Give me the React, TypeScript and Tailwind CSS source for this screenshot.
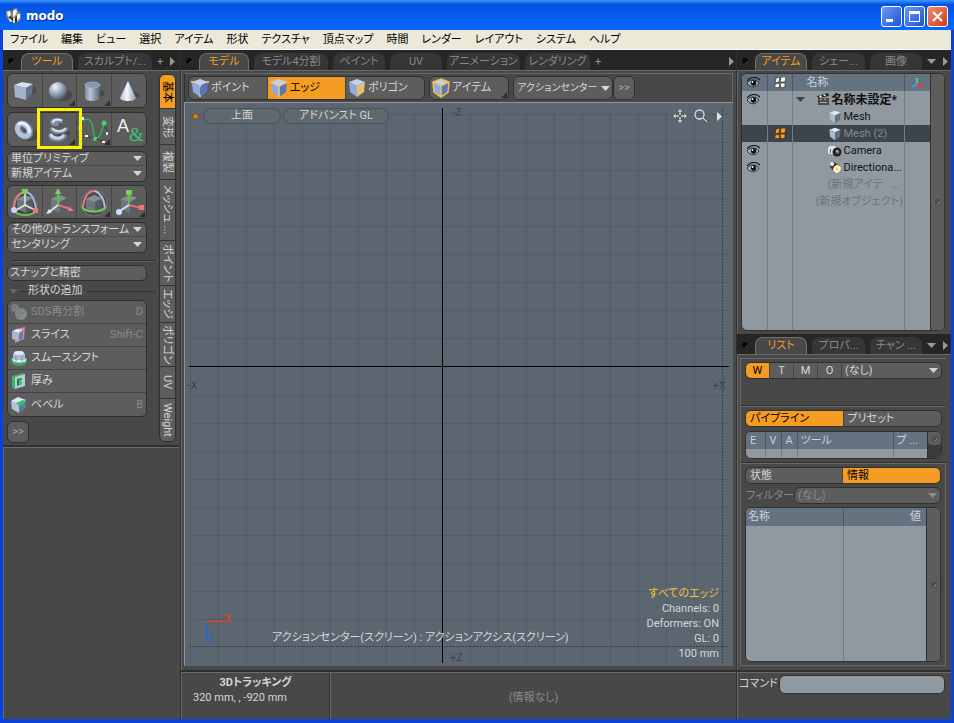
import type { ReactNode } from "react";
import { clsx } from "clsx";

const menus = [
  "ファイル",
  "編集",
  "ビュー",
  "選択",
  "アイテム",
  "形状",
  "テクスチャ",
  "頂点マップ",
  "時間",
  "レンダー",
  "レイアウト",
  "システム",
  "ヘルプ",
];

const sideTabs = [
  { label: "基本", size: "h-[34px]" },
  { label: "変形", size: "h-[36px]" },
  { label: "複製", size: "h-[35px]" },
  { label: "メッシュ ...", size: "h-[61px]" },
  { label: "ポイント", size: "h-[45px]" },
  { label: "エッジ", size: "h-[37px]" },
  { label: "ポリゴン", size: "h-[44px]" },
  { label: "UV", size: "h-[32px]" },
  { label: "Weight", size: "h-[42px]" },
];

function Gradients() {
  return (
    <svg className="absolute h-0 w-0" aria-hidden="true">
      <defs>
        <radialGradient id="ball" cx="0.35" cy="0.28" r="0.75">
          <stop offset="0" stopColor="#f1f5fa" />
          <stop offset="0.4" stopColor="#a9bad0" />
          <stop offset="1" stopColor="#4b5768" />
        </radialGradient>
        <linearGradient id="tube" x1="0" x2="1">
          <stop offset="0" stopColor="#7e8ca1" />
          <stop offset="0.35" stopColor="#b9c6d8" />
          <stop offset="1" stopColor="#566275" />
        </linearGradient>
        <linearGradient id="coneFill" x1="0" x2="1">
          <stop offset="0.1" stopColor="#b9cbe0" />
          <stop offset="0.45" stopColor="#f3f8fd" />
          <stop offset="1" stopColor="#8295ad" />
        </linearGradient>
      </defs>
    </svg>
  );
}

/* ---------- icons ---------- */

function Logo() {
  return (
    <svg width="17" height="16" viewBox="0 0 17 16">
      <path d="M1 3l4-1 2 2 1-3 4-1 1 3 3 2v6l-2 3-4 1H6l-3-4-2-3z" fill="#7e837e" />
      <path d="M2 4l3-1 1 4-3 2zM8 3l3-2 1 3-2 4-2 1zM12 6l3 0v4l-3 3z" fill="#f4f4ee" />
      <path d="M5 8l3 2v5H6L4 11zM10 10l2-2v6l-2 1z" fill="#2f3530" />
      <path d="M3 10l2 4h3l-2-3zM8 9l2 1v5H8z" fill="#d5d8d2" />
    </svg>
  );
}

function BoxIcon() {
  return (
    <svg width="28" height="28" viewBox="0 0 28 28">
      <path d="M12 23l14-8-3-6-8 4z" fill="#333" opacity=".45" />
      <path d="M3 8l8-3 11 2-7 4z" fill="#d7e1ee" />
      <path d="M3 8l12 3v12L4 20z" fill="#a3b2c7" />
      <path d="M15 11l7-4-1 10-6 6z" fill="#657389" />
    </svg>
  );
}

function SphereIcon() {
  return (
    <svg width="28" height="28" viewBox="0 0 28 28">
      <ellipse cx="18" cy="18" rx="9" ry="6" fill="#333" opacity=".5" />
      <circle cx="13" cy="14" r="9" fill="url(#ball)" />
    </svg>
  );
}

function CylinderIcon() {
  return (
    <svg width="28" height="28" viewBox="0 0 28 28">
      <path d="M13 23l12-5-3-6-4 4z" fill="#333" opacity=".5" />
      <path d="M5 8v13c0 4 15 4 15 0V8z" fill="url(#tube)" />
      <ellipse cx="12.5" cy="8" rx="7.5" ry="3" fill="#8796ac" stroke="#a8b6ca" strokeWidth=".7" />
    </svg>
  );
}

function ConeIcon() {
  return (
    <svg width="28" height="28" viewBox="0 0 28 28">
      <path d="M13 24l12-5-9-7z" fill="#333" opacity=".5" />
      <path d="M13 4L5 21c1 4 15 4 16 0z" fill="url(#coneFill)" />
    </svg>
  );
}

function TorusIcon() {
  return (
    <svg width="28" height="28" viewBox="0 0 28 28">
      <ellipse cx="19" cy="19" rx="9" ry="6" fill="#333" opacity=".5" />
      <g transform="rotate(50 13 14)" fill="none">
        <ellipse cx="13" cy="14" rx="7" ry="5" stroke="#6d7e98" strokeWidth="7" />
        <ellipse cx="12.5" cy="14.5" rx="7" ry="5.2" stroke="#b3c3d9" strokeWidth="5" />
        <path d="M5 14c1-5 8-7 13-3" stroke="#eef4fb" strokeWidth="2.5" strokeLinecap="round" />
      </g>
    </svg>
  );
}

function CoilIcon() {
  return (
    <svg width="28" height="28" viewBox="0 0 28 28" fill="none" strokeLinecap="round">
      <path d="M12 24l14-6-5-8-9 7z" fill="#333" opacity=".45" />
      {/* lower coil, middle coil, then the thin top one */}
      <path d="M6 20c1 4 11 4 13 0" stroke="#7d8ea8" strokeWidth="5" />
      <path d="M6 19c2 4 10 4 12 1" stroke="#c9d6e8" strokeWidth="3" />
      <path d="M7 13c2 4 10 4 14 0" stroke="#7d8ea8" strokeWidth="4" />
      <path d="M8 13c3 3 9 3 12 0" stroke="#d5e1f0" strokeWidth="2" />
      <path d="M16 5c-4-2-8-1-9 1 0 2 2 2 5 2" stroke="#7d8ea8" strokeWidth="4" />
      <path d="M16 4c-4-1-7 0-8 2" stroke="#dfe9f5" strokeWidth="2" />
    </svg>
  );
}

function CurveIcon() {
  return (
    <svg width="34" height="32" viewBox="0 0 34 32" fill="none" className="shrink-0">
      <path d="M6 4L4 14M8 22l20 6M27 9l4 10" stroke="#222" strokeDasharray="2 2" />
      <path d="M3 14C4 3 15 2 16 14s6 16 11-5" stroke="#35b060" strokeWidth="1.5" />
      <circle cx="27" cy="9" r="2.5" fill="#42d07c" />
      <circle cx="18" cy="25" r="2" fill="#42d07c" />
      <circle cx="3" cy="14" r="2" fill="#42d07c" />
      <path d="M5 3h2v3H5zM8 21h3v2H8zM25 27h3v2h-3zM29 18h2v3h-2z" fill="#f2f2f2" />
    </svg>
  );
}

function TextIcon() {
  return (
    <svg width="32" height="32" viewBox="0 0 32 32">
      <text x="4" y="18" fontSize="18" fontFamily="Liberation Sans" fill="#eef1f5">A</text>
      <text x="16" y="27" fontSize="19" fontFamily="Liberation Serif" fill="#36c573">&amp;</text>
    </svg>
  );
}

function GizmoCube() {
  return (
    <g>
      <path d="M8 12l8-4 8 3v10l-7 5-9-4z" fill="#6e777b" />
      <path d="M8 12l8-4 8 3-7 4z" fill="#858e92" />
      <path d="M17 15l7-4v10l-7 5z" fill="#555d61" />
    </g>
  );
}

function TransformIcon() {
  return (
    <svg width="32" height="31" viewBox="0 0 32 31" fill="none">
      <circle cx="16" cy="17" r="12" fill="#444" stroke="#777" />
      <GizmoCube />
      <path d="M5 22C5 12 9 7 15 5" stroke="#e97d82" strokeWidth="2" />
      <path d="M18 5c5 2 8 8 9 17" stroke="#a9b4e6" strokeWidth="2" />
      <path d="M6 25c5 4 15 4 20 0" stroke="#63bf56" strokeWidth="2" />
      <path d="M16 7v11L6 24M16 18l10 5" stroke="#dfe6ea" strokeWidth="1.5" />
      <path d="M13 2h6v5h-6z" fill="#6fd356" />
      <path d="M24 21h5v5h-5z" fill="#ef7773" />
      <circle cx="5" cy="23" r="3" fill="#c8d0fa" />
    </svg>
  );
}

function MoveIcon() {
  return (
    <svg width="32" height="31" viewBox="0 0 32 31" fill="none">
      <GizmoCube />
      <path d="M15 5v13" stroke="#5fbd4c" strokeWidth="2" />
      <path d="M15 18l13 4" stroke="#e46f75" strokeWidth="2" />
      <path d="M15 18L5 26" stroke="#d4e0ef" strokeWidth="2" />
      <path d="M15 1l3 6h-6z" fill="#79d55f" />
      <path d="M31 24l-6 0 1-4z" fill="#ef7b80" />
      <path d="M3 27l3-5 3 3z" fill="#e5ecf6" />
    </svg>
  );
}

function RotateIcon() {
  return (
    <svg width="32" height="31" viewBox="0 0 32 31" fill="none">
      <circle cx="16" cy="16" r="13" fill="#4a4a4a" stroke="#777" />
      <GizmoCube />
      <path d="M5 20C6 10 10 4 17 4" stroke="#e67b80" strokeWidth="2" />
      <path d="M17 4c6 2 9 8 10 17" stroke="#b3bfee" strokeWidth="2" />
      <path d="M4 20c4 6 19 6 24 0" stroke="#72cc5f" strokeWidth="2" />
    </svg>
  );
}

function ScaleIcon() {
  return (
    <svg width="32" height="31" viewBox="0 0 32 31" fill="none">
      <GizmoCube />
      <path d="M16 6v12" stroke="#5fbd4c" strokeWidth="2" />
      <path d="M16 18l12 3" stroke="#e46f75" strokeWidth="2" />
      <path d="M16 18l-9 6" stroke="#d4e0ef" strokeWidth="2" />
      <path d="M13 3h6v5h-6z" fill="#6fd356" />
      <path d="M26 18h5v5h-5z" fill="#ef7773" />
      <circle cx="6" cy="25" r="3" fill="#d3dcfa" />
    </svg>
  );
}

type CubeKind = "point" | "edge" | "polygon" | "item" | "mesh";

function ModeCube({ kind }: { kind: CubeKind }) {
  const size = kind === "mesh" ? 14 : 20;
  return (
    <svg width={size} height={size} viewBox="0 0 20 20" className="shrink-0">
      <path d="M2 4l8-3 8 3-8 4z" fill={kind === "mesh" ? "#dce8f2" : "#c3d0ee"} />
      <path d="M2 4l8 4v11l-7-5z" fill={kind === "mesh" ? "#a9bccd" : "#92a9e2"} />
      <path
        d="M18 4l-8 4v11l7-5z"
        fill={kind === "polygon" ? "#e0c473" : kind === "mesh" ? "#5f7185" : "#5b74b8"}
      />
      {kind === "edge" && <path d="M10 19V8L2 4M10 8l8-4" stroke="#e9cf83" strokeWidth="1.5" fill="none" />}
      {kind === "item" && (
        <path d="M2 4l8-3 8 3-1 10-7 5-7-5zM2 4l8 4 8-4M10 8v11" stroke="#e5c25e" strokeWidth="1.5" fill="none" />
      )}
      {kind === "point" && (
        <path d="M1 3h3v2H1zM16 3h3v2h-3zM9 7h2v2H9zM9 17h2v2H9zM9 1h2v1H9z" fill="#edc24a" />
      )}
    </svg>
  );
}

function EyeIcon() {
  return (
    <svg width="13" height="11" viewBox="0 0 13 11" className="ml-[5px]">
      <path d="M0 4c3-4 9-5 13-1" stroke="#16191c" strokeWidth="1.2" fill="none" />
      <path d="M0 6c3-4 9-4 12 0-3 5-9 5-12 0z" fill="#a5adb5" stroke="#16191c" strokeWidth=".8" />
      <circle cx="6.5" cy="6" r="2.7" fill="#0c0d0e" />
      <circle cx="5.5" cy="5" r=".9" fill="#fff" />
    </svg>
  );
}

function TilesIcon({ fill }: { fill: string }) {
  return (
    <svg width="12" height="12" viewBox="0 0 12 12" className="mx-auto">
      <path d="M2 1l4-1-1 5-4 1zM7 0h5l-1 5H6zM1 7l4-1 1 4-5 1zM6 6h5v4l-4 1z" fill={fill} stroke="#222" strokeWidth=".6" />
    </svg>
  );
}

function AxesIcon() {
  return (
    <svg width="13" height="12" viewBox="0 0 13 12" className="mx-auto" fill="none" strokeWidth="2.5">
      <path d="M6 7V1" stroke="#3ccb7c" />
      <path d="M6 7l6 3" stroke="#e33a34" />
      <path d="M6 7l-5 3" stroke="#6084e8" />
    </svg>
  );
}

function SceneIcon() {
  return (
    <svg width="13" height="13" viewBox="0 0 13 13" className="shrink-0">
      <path d="M1 5h11v7H1z" fill="#4b4b4b" />
      <path d="M0 3l11-3 1 3-11 2z" fill="#222" />
      <path d="M2 3l2-1 1 2-2 1zM6 2l2-1 1 2H7z" fill="#ddd" />
      <path d="M3 9h7v1H3zM3 6h2v1H3zM7 6h2v1H7z" fill="#aaa" />
    </svg>
  );
}

function CameraIcon() {
  return (
    <svg width="14" height="12" viewBox="0 0 14 12" className="shrink-0">
      <path d="M0 3l2-2h5l2 2v6l-7 0-2-1z" fill="#e4e4e4" />
      <path d="M2 4h1v4H2z" fill="#666" />
      <circle cx="9" cy="7" r="4.5" fill="#222" />
      <circle cx="9.5" cy="7" r="2" fill="#6c6c78" />
      <circle cx="9" cy="6" r=".8" fill="#fff" />
    </svg>
  );
}

function LightIcon() {
  return (
    <svg width="14" height="13" viewBox="0 0 14 13" className="shrink-0">
      <path d="M2 2l4-1 6 4-5 7-5-6z" fill="#3b3b38" />
      <circle cx="4" cy="3" r="2" fill="#f0f0ea" />
      <ellipse cx="9" cy="8" rx="3.5" ry="4" transform="rotate(35 9 8)" fill="#fff5bd" />
      <ellipse cx="9" cy="8" rx="1.5" ry="2" fill="#ecd679" />
    </svg>
  );
}

function SdsIcon() {
  return (
    <svg width="18" height="18" viewBox="0 0 18 18">
      <circle cx="5" cy="5" r="4" fill="#7d8080" />
      <circle cx="11" cy="11" r="6" fill="#858a8a" />
      <path d="M2 5l5-3M5 9l4-4M7 14l8-6M6 11l7-5" stroke="#6c6c6c" strokeWidth=".7" />
    </svg>
  );
}

function SliceIcon() {
  return (
    <svg width="18" height="18" viewBox="0 0 18 18">
      <path d="M6 3l9-2-1 12-9 4z" fill="#dd84a6" />
      <path d="M2 5l5-2 6 1-4 3z" fill="#e2ebf7" />
      <path d="M2 5l7 2v8l-7-2z" fill="#a4b6d0" />
      <path d="M9 7l4-3v8l-4 3z" fill="#6c7d98" />
    </svg>
  );
}

function SmoothShiftIcon() {
  return (
    <svg width="18" height="18" viewBox="0 0 18 18">
      <ellipse cx="9" cy="12" rx="8" ry="5" fill="#37ad62" />
      <path d="M3 5l3-3h6l3 3v6l-3 3H6l-3-3z" fill="#a8bfd9" />
      <ellipse cx="9" cy="4" rx="5" ry="2" fill="#dce8f5" />
      <path d="M1 9l3 2h10l3-2-2 4H4z" fill="#edf3f8" />
      <path d="M6 7v6M12 7v6" stroke="#7d93ae" />
    </svg>
  );
}

function ThickenIcon() {
  return (
    <svg width="18" height="18" viewBox="0 0 18 18">
      <path d="M2 4l11-3 2 1-9 3-1 12-3-2z" fill="#2fb866" />
      <path d="M5 5l10-3v12L5 17z" fill="#b7ccd8" />
      <path d="M7 7l5-1v6l-5 2z" fill="#27774a" />
      <path d="M9 8l3-1v5l-3 1z" fill="#45c177" />
    </svg>
  );
}

function BevelIcon() {
  return (
    <svg width="18" height="18" viewBox="0 0 18 18">
      <path d="M1 5l7-4 8 3-7 5z" fill="#dbe7f5" />
      <path d="M1 5l8 4v8l-7-4z" fill="#b3c5de" />
      <path d="M9 9l7-5v8l-7 5z" fill="#62759a" />
      <path d="M6 7l7-3 2 1-2 4-4 1z" fill="#35c26d" />
    </svg>
  );
}

function Arrow({ dir = "down", className }: { dir?: "down" | "right"; className?: string }) {
  return (
    <svg width="9" height="9" viewBox="0 0 9 9" className={clsx("shrink-0", className)} fill="currentColor">
      {dir === "down" ? <path d="M0 2h9L4.5 7z" /> : <path d="M2 0v9l5-4.5z" />}
    </svg>
  );
}

function Knob() {
  return (
    <svg width="8" height="8" viewBox="0 0 8 8" className="shrink-0">
      <circle cx="4" cy="4" r="3" fill="#4c4c4c" />
      <path d="M3 6a3 3 0 003-3" stroke="#858585" fill="none" />
    </svg>
  );
}

/* ---------- building blocks ---------- */

function Tab({ children, active, className }: { children: ReactNode; active?: boolean; className?: string }) {
  return (
    <button
      className={clsx(
        "h-[17px] shrink-0 whitespace-nowrap rounded-t-lg leading-4",
        active ? "border-x border-t border-[#707070] bg-[#484848] text-[#f59d22]" : "bg-[#363636] text-[#898989]",
        className,
      )}
    >
      {children}
    </button>
  );
}

function TabBar({ children }: { children: ReactNode }) {
  return (
    <div className="flex h-5 shrink-0 items-end gap-[5px] bg-[#262626] pl-[5px] text-[#999]">
      <svg width="8" height="17" viewBox="0 0 8 17" className="shrink-0">
        <circle cx="3" cy="8" r="3" fill="#080808" />
        <path d="M3 11l3-3" stroke="#555" />
      </svg>
      {children}
    </div>
  );
}

function Dropdown({ label, value, className, arrow = "right-1" }: { label: string; value: string; className?: string; arrow?: string }) {
  return (
    <div className={clsx("relative min-w-0", className)}>
      <select aria-label={label} className="block h-full w-full appearance-none bg-transparent pl-[3px] pr-3 outline-none">
        <option>{value}</option>
      </select>
      <Arrow className={clsx("pointer-events-none absolute inset-y-0 my-auto", arrow)} />
    </div>
  );
}

const group = "overflow-hidden rounded-md border border-[#303030] bg-[#5d5d5d]";

function IconRow({ items, className }: { items: { name: string; icon: ReactNode; more?: boolean }[]; className?: string }) {
  return (
    <div className={clsx(group, "grid grid-cols-4 divide-x divide-[#464646]", className)}>
      {items.map((item) => (
        <button key={item.name} aria-label={item.name} className="relative flex items-center justify-center overflow-hidden">
          {item.icon}
          {item.more && (
            <svg width="6" height="6" className="absolute bottom-px right-px">
              <path d="M6 0v6H0z" fill="#2f2f2f" />
            </svg>
          )}
        </button>
      ))}
    </div>
  );
}

const shapeTools = [
  { label: "SDS再分割", hint: "D", icon: <SdsIcon />, off: true },
  { label: "スライス", hint: "Shift-C", icon: <SliceIcon /> },
  { label: "スムースシフト", icon: <SmoothShiftIcon /> },
  { label: "厚み", icon: <ThickenIcon /> },
  { label: "ベベル", hint: "B", icon: <BevelIcon /> },
];

/* ---------- left column ---------- */

function ToolColumn() {
  return (
    <aside className="flex w-[178px] shrink-0 flex-col border-r border-[#303030]">
      <TabBar>
        <Tab active className="w-[52px]">ツール</Tab>
        <Tab className="w-[74px]">スカルプト/...</Tab>
        <button className="h-[17px] leading-4">+</button>
        <Arrow dir="right" className="mb-1" />
      </TabBar>

      <div className="flex justify-between border-t border-[#6a6a6a] pb-[2px] pl-1 pr-[4px] pt-[2px]">
        <div className="flex w-[140px] flex-col">
          <IconRow
            className="h-[35px]"
            items={[
              { name: "立方体", icon: <BoxIcon /> },
              { name: "球", icon: <SphereIcon />, more: true },
              { name: "円柱", icon: <CylinderIcon />, more: true },
              { name: "円錐", icon: <ConeIcon /> },
            ]}
          />
          <div className="relative mt-1">
            <IconRow
              className="h-[35px]"
              items={[
                { name: "トーラス", icon: <TorusIcon /> },
                { name: "らせん", icon: <CoilIcon />, more: true },
                { name: "カーブ", icon: <CurveIcon />, more: true },
                { name: "テキスト", icon: <TextIcon /> },
              ]}
            />
            <div className="pointer-events-none absolute -top-1 left-[30px] h-[41px] w-[45px] border-[3px] border-[#fff200]" />
          </div>
          <div className={clsx(group, "mt-1 divide-y divide-[#4a4a4a]")}>
            <Dropdown label="プリミティブ" value="単位プリミティブ" className="h-[14px]" />
            <Dropdown label="アイテム" value="新規アイテム" className="h-[15px]" />
          </div>
          <IconRow
            className="mt-[3px] h-[34px]"
            items={[
              { name: "トランスフォーム", icon: <TransformIcon /> },
              { name: "移動", icon: <MoveIcon /> },
              { name: "回転", icon: <RotateIcon />, more: true },
              { name: "スケール", icon: <ScaleIcon />, more: true },
            ]}
          />
          <div className={clsx(group, "mt-[3px] divide-y divide-[#4a4a4a]")}>
            <Dropdown label="トランスフォーム" value="その他のトランスフォーム" className="h-[14px]" />
            <Dropdown label="センター" value="センタリング" className="h-[15px]" />
          </div>
          <div className="-mr-2 ml-1 mt-[7px] border-b border-t border-b-[#5c5c5c] border-t-[#303030]" />
          <button className={clsx(group, "mt-[3px] h-4 pl-[2px] text-left leading-[14px]")}>スナップと精密</button>
          <div className="-mr-2 flex h-5 items-center gap-1">
            <Arrow className="ml-[2px] text-[#666]" />
            <span className="-mr-[2px] h-px w-1 bg-[#303030]" />
            <span className="whitespace-nowrap">形状の追加</span>
            <span className="h-px flex-1 bg-[#303030]" />
          </div>
          <div className={clsx(group, "-mt-px divide-y divide-[#444]")}>
            {shapeTools.map((tool) => (
              <button
                key={tool.label}
                className={clsx("flex h-[23px] w-full items-center gap-[3px] pl-[2px] pr-[3px]", tool.off && "text-[#8a8a8a]")}
              >
                {tool.icon}
                <span>{tool.label}</span>
                <span className="ml-auto text-[#8a8a8a]">{tool.hint}</span>
              </button>
            ))}
          </div>
          <button className={clsx(group, "mt-1 h-[22px] w-[22px] text-[#a0a8b4]")}>&gt;&gt;</button>
        </div>

        <div className="mt-px flex w-[17px] flex-col divide-y divide-[#343434] self-start overflow-hidden rounded-md border border-[#303030] bg-[#5d5d5d]">
          {sideTabs.map((tab, i) => (
            <button
              key={tab.label}
              className={clsx(
                "flex items-center justify-center whitespace-nowrap leading-[15px] [text-orientation:sideways] [writing-mode:vertical-rl]",
                tab.size,
                i === 0 && "bg-[#f59d22] text-black",
              )}
            >
              {tab.label}
            </button>
          ))}
        </div>
      </div>
      <div className="mr-px flex-1 border-t-2 border-[#303030]">
        <div className="h-full border-l border-t border-[#6a6a6a]" />
      </div>
    </aside>
  );
}

/* ---------- viewport ---------- */

const steps = Array.from({ length: 19 }, (_, i) => i - 9);

function Grid() {
  return (
    <svg
      viewBox="0 0 548 562"
      preserveAspectRatio="xMidYMid slice"
      className="absolute inset-0 h-full w-full"
      fontSize="11"
      fill="#3d454d"
    >
      <g shapeRendering="crispEdges">
        {steps.map((n) => (
          <g key={n} fill="#525c66">
            <rect x={257 + n * 28} y="5" width="1" height="554" />
            <rect x="4" y={263 + n * 28} width="540" height="1" />
          </g>
        ))}
        <path d="M537.5 5v554M4 542.5h540" stroke="#39424b" strokeDasharray="2 1" />
        <rect x="257" y="5" width="1" height="554" fill="#000" />
        <rect x="4" y="263" width="540" height="1" fill="#000" />
      </g>
      <text x="267" y="13">-Z</text>
      <text x="265" y="557">+Z</text>
      <text x="3" y="285">-X</text>
      <text x="527" y="285">+X</text>
      <path d="M22 517.5h20" stroke="#e8401a" strokeWidth="1.4" fill="none" />
      <path d="M22.5 518v20" stroke="#1f66e6" strokeWidth="1.4" fill="none" />
      <text x="40" y="518" fill="#e8401a">X</text>
      <text x="22" y="538" fill="#1f66e6">Z</text>
    </svg>
  );
}

function Viewport() {
  return (
    <div className="relative flex min-h-0 flex-1 flex-col justify-between border-l border-t border-[#8d959c] bg-[#5c6670]">
      <Grid />
      <div className="relative flex items-center gap-[2px] pl-[7px] pr-[9px] pt-[5px]">
        <span className="mr-[2px] h-[7px] w-[7px] rounded-full border border-[#6b4d1f] bg-[#c2842c]" />
        <button className="h-4 w-[78px] rounded-lg border border-[#4b535b] bg-[#60676d] leading-[14px]">上面</button>
        <button className="h-4 w-[106px] rounded-lg border border-[#4b535b] bg-[#60676d] leading-[14px]">アドバンスト GL</button>
        <div className="ml-auto flex items-center gap-[7px] text-[#e4e4e4]">
          <button aria-label="パン">
            <svg width="14" height="14" viewBox="0 0 14 14" className="block">
              <path d="M7 0l3 3H4zM7 14l3-3H4zM0 7l3-3v6zM14 7l-3-3v6zM6 3h2v3H6zM6 8h2v3H6zM3 6h3v2H3zM8 6h3v2H8z" fill="#eee" stroke="#333" strokeWidth=".4" />
            </svg>
          </button>
          <button aria-label="ズーム">
            <svg width="14" height="14" viewBox="0 0 14 14" fill="none" className="block">
              <path d="M9 9l4 4" stroke="#333" strokeWidth="3" />
              <circle cx="5.5" cy="5.5" r="4.5" stroke="#ddd" strokeWidth="1.3" />
              <path d="M9 9l4 4" stroke="#ddd" strokeWidth="1.5" />
            </svg>
          </button>
          <Arrow dir="right" />
        </div>
      </div>
      <div className="relative flex items-end justify-end pb-[5px] pr-[14px] text-right leading-[15px]">
        <p className="mb-4 flex-1 whitespace-nowrap pl-[87px] text-left">
          アクションセンター(スクリーン) : アクションアクシス(スクリーン)
        </p>
        <div className="shrink-0">
          <p className="text-[#f7c331]">すべてのエッジ</p>
          <p>Channels: 0</p>
          <p>Deformers: ON</p>
          <p>GL: 0</p>
          <p>100 mm</p>
        </div>
      </div>
    </div>
  );
}

function ModelColumn() {
  return (
    <section className="flex min-w-0 flex-1 flex-col border-r border-[#303030]">
      <TabBar>
        <Tab active className="w-[50px]">モデル</Tab>
        <Tab className="w-[74px]">モデル4分割</Tab>
        <Tab className="w-[52px]">ペイント</Tab>
        <Tab className="w-[52px]">UV</Tab>
        <Tab className="w-[73px]">アニメーション</Tab>
        <Tab className="w-[65px]">レンダリング</Tab>
        <button className="h-[17px] leading-4">+</button>
        <Arrow dir="right" className="mb-1 ml-auto" />
      </TabBar>
      <div className="flex min-h-0 flex-1 flex-col border-l border-t border-[#6a6a6a] pb-1 pl-[2px] pr-[3px] pt-[2px]">
        <div className="flex h-[29px] shrink-0 items-center gap-1 border border-b-0 border-[#686868] border-l-[#303030] pl-[3px]">
          <div className={clsx(group, "flex h-6 divide-x divide-[#444]")}>
            <button className="flex w-[79px] items-center gap-px pl-px"><ModeCube kind="point" />ポイント</button>
            <button className="flex w-[78px] items-center gap-px bg-[#f59d22] pl-px text-black"><ModeCube kind="edge" />エッジ</button>
            <button className="flex w-[78px] items-center gap-px pl-px"><ModeCube kind="polygon" />ポリゴン</button>
          </div>
          <button className={clsx(group, "relative flex h-6 w-[80px] items-center gap-px pl-px")}>
            <ModeCube kind="item" />アイテム
            <svg width="6" height="6" className="absolute bottom-px right-px">
              <path d="M6 0v6H0z" fill="#2f2f2f" />
            </svg>
          </button>
          <div className="flex">
            <Dropdown label="アクションセンター" value="アクションセンター" className={clsx(group, "h-6 w-[100px] text-[10px]")} arrow="right-[2px]" />
            <button className={clsx(group, "h-6 w-[22px] text-[#a0a8b4]")}>&gt;&gt;</button>
          </div>
        </div>
        <Viewport />
      </div>
      <div className="flex h-[49px] shrink-0 border-t-2 border-[#303030]">
        <div className="w-[149px] border-l border-r border-t border-[#6a6a6a] border-r-[#303030] px-[11px] pt-[2px] leading-[15px]">
          <h2 className="text-center font-bold">3Dトラッキング</h2>
          <p>320 mm, , -920 mm</p>
        </div>
        <div className="flex flex-1 items-center justify-center border-l border-t border-[#6a6a6a] pt-1 text-[#8a8a8a]">
          (情報なし)
        </div>
      </div>
    </section>
  );
}

/* ---------- right column ---------- */

const sceneItems = [
  { name: "名称未設定*", icon: <SceneIcon />, eye: true, root: true },
  { name: "Mesh", icon: <ModeCube kind="mesh" /> },
  { name: "Mesh (2)", icon: <ModeCube kind="mesh" />, selected: true },
  { name: "Camera", icon: <CameraIcon />, eye: true },
  { name: "Directiona...", icon: <LightIcon />, eye: true },
  { name: "(新規アイテ\u00a0\u00a0\u00a0...", ghost: "pl-[35px]" },
  { name: "(新規オブジェクト)", ghost: "pl-[23px]" },
];

function ItemList() {
  return (
    <div className="flex h-[258px] shrink-0 overflow-hidden rounded-md border border-[#303030] bg-[#9098a0] text-[#111]">
      <div className="flex flex-1 flex-col">
        <table className="h-full w-full table-fixed border-collapse text-left">
          <thead className="bg-[#65727f] text-[#c5d3e2]">
            <tr className="h-[17px]">
              <th className="w-[25px] border-r border-[#4c5865] p-0"><EyeIcon /></th>
              <th className="w-[25px] border-r border-[#4c5865] p-0"><TilesIcon fill="#f2f2f2" /></th>
              <th className="border-r border-[#4c5865] p-0 pl-[14px] font-normal leading-4">名称</th>
              <th className="w-[26px] p-0"><AxesIcon /></th>
            </tr>
          </thead>
          <tbody>
            {sceneItems.map((item) => (
              <tr key={item.name} className={clsx("h-[17px]", item.selected && "bg-[#3d444a] text-[#828a91]")}>
                <td className="border-r border-[#747e88] p-0">{item.eye && <EyeIcon />}</td>
                <td className="border-r border-[#747e88] p-0">{item.selected && <TilesIcon fill="#f59d22" />}</td>
                <td className="border-r border-[#747e88] p-0">
                  <div
                    className={clsx(
                      "flex items-center gap-[2px] whitespace-nowrap leading-4",
                      item.root && "pl-[3px] text-xs font-bold leading-4",
                      item.ghost ? clsx(item.ghost, "text-[#6b747d]") : !item.root && "pl-[35px]",
                    )}
                  >
                    {item.root && <Arrow className="mr-[10px] text-[#3a424a]" />}
                    {item.icon}
                    {item.name}
                  </div>
                </td>
                <td className="p-0" />
              </tr>
            ))}
            <tr>
              <td className="border-r border-[#747e88] p-0" />
              <td className="border-r border-[#747e88] p-0" />
              <td className="border-r border-[#747e88] p-0" />
              <td className="p-0" />
            </tr>
          </tbody>
        </table>
      </div>
      <div className="flex w-[14px] items-center justify-center border-l border-[#303030] bg-[#5d5d5d]"><Knob /></div>
    </div>
  );
}

function ToolList() {
  return (
    <div className="flex h-[28px] overflow-hidden rounded-md border border-[#303030] bg-[#9098a0]">
      <table className="min-w-0 flex-1 table-fixed border-collapse text-left">
        <thead className="bg-[#65727f] text-[#c5d3e2]">
          <tr className="h-[17px]">
            <th className="w-[19px] border-r border-[#4c5865] p-0 pl-1 font-normal leading-4">E</th>
            <th className="w-[16px] border-r border-[#4c5865] p-0 text-center font-normal leading-4">V</th>
            <th className="w-[16px] border-r border-[#4c5865] p-0 text-center font-normal leading-4">A</th>
            <th className="border-r border-[#4c5865] p-0 pl-[3px] font-normal leading-4">ツール</th>
            <th className="w-[34px] p-0 pl-[3px] font-normal leading-4">プ ...</th>
          </tr>
        </thead>
        <tbody>
          <tr className="h-[9px]">
            <td className="border-r border-[#747e88] p-0" />
            <td className="border-r border-[#747e88] p-0" />
            <td className="border-r border-[#747e88] p-0" />
            <td className="border-r border-[#747e88] p-0" />
            <td className="p-0" />
          </tr>
        </tbody>
      </table>
      <div className="flex w-[14px] flex-col border-l border-[#303030] bg-[#3c3c3c]">
        <div className="flex h-[13px] items-center justify-center rounded-b bg-[#5d5d5d]"><Knob /></div>
      </div>
    </div>
  );
}

function InfoTable() {
  return (
    <div className="mt-[3px] flex min-h-0 flex-1 overflow-hidden rounded-md border border-[#303030] bg-[#9098a0]">
      <table className="h-full min-w-0 flex-1 table-fixed border-collapse">
        <thead className="bg-[#65727f] text-[#c5d3e2]">
          <tr className="h-[18px]">
            <th className="w-[97px] border-r border-[#4c5865] p-0 pl-[2px] text-left font-normal leading-4">名称</th>
            <th className="p-0 pr-[5px] text-right font-normal leading-4">値</th>
          </tr>
        </thead>
        <tbody>
          <tr>
            <td className="border-r border-[#747e88] p-0" />
            <td className="p-0" />
          </tr>
        </tbody>
      </table>
      <div className="flex w-[14px] items-center justify-center border-l border-[#303030] bg-[#5d5d5d]"><Knob /></div>
    </div>
  );
}

const section = "border-l border-t border-[#6a6a6a] px-1 pt-[3px]";

function SceneColumn() {
  return (
    <aside className="flex w-[214px] shrink-0 flex-col">
      <TabBar>
        <Tab active className="w-[52px]">アイテム</Tab>
        <Tab className="w-[53px]">シェー...</Tab>
        <Tab className="w-[52px]">画像</Tab>
        <Arrow className="mb-1" />
        <Arrow dir="right" className="mb-1" />
      </TabBar>
      <div className="border-l border-t border-[#6a6a6a] pb-[3px] pl-[3px] pr-[6px] pt-[2px]">
        <ItemList />
      </div>

      <TabBar>
        <Tab active className="w-[52px]">リスト</Tab>
        <Tab className="w-[53px]">プロパ...</Tab>
        <Tab className="w-[52px]">チャン ...</Tab>
        <Arrow className="mb-1" />
        <Arrow dir="right" className="mb-1" />
      </TabBar>
      <div className="flex min-h-0 flex-1 flex-col border-l border-t border-[#6a6a6a] pb-1 pl-[2px] pr-[5px] pt-[3px]">
        <div className={clsx(section, "h-[48px] shrink-0 border-b border-b-[#303030]")}>
          <div className={clsx(group, "flex h-[17px] divide-x divide-[#444] leading-[15px]")}>
            <button className="w-6 bg-[#f59d22] text-black">W</button>
            <button className="w-6">T</button>
            <button className="w-6">M</button>
            <button className="w-6">O</button>
            <Dropdown label="ウェイトマップ" value="(なし)" className="flex-1" arrow="right-[3px]" />
          </div>
        </div>
        <div className={clsx(section, "h-[57px] shrink-0 border-b border-b-[#303030]")}>
          <div className={clsx(group, "mb-1 grid h-[17px] grid-cols-2 divide-x divide-[#444] leading-[15px]")}>
            <button className="bg-[#f59d22] pl-1 text-left text-black">パイプライン</button>
            <button className="pl-1 text-left">プリセット</button>
          </div>
          <ToolList />
        </div>
        <div className={clsx(section, "flex min-h-0 flex-1 flex-col border-b border-r pb-[3px]")}>
          <div className={clsx(group, "grid h-[17px] shrink-0 grid-cols-2 divide-x divide-[#444] leading-[15px]")}>
            <button className="pl-1 text-left">状態</button>
            <button className="bg-[#f59d22] pl-1 text-left text-black">情報</button>
          </div>
          <div className="mt-[3px] flex shrink-0 items-center text-[#8a8a8a]">
            <span className="w-[49px] whitespace-nowrap pl-px">フィルター</span>
            <Dropdown label="フィルター" value="(なし)" className={clsx(group, "h-[17px] flex-1 leading-[15px]")} arrow="right-[3px]" />
          </div>
          <InfoTable />
        </div>
      </div>

      <div className="h-[49px] shrink-0 border-t-2 border-[#303030]">
        <div className="flex h-full items-start border-l border-t border-[#6a6a6a] pl-px pr-[6px] pt-[2px]">
          <label htmlFor="command" className="w-10 shrink-0 whitespace-nowrap leading-[18px]">コマンド</label>
          <input id="command" className="h-[19px] min-w-0 flex-1 rounded-md border border-[#303030] bg-[#9098a0] px-2 text-black outline-none" />
        </div>
      </div>
    </aside>
  );
}

const caption = "flex h-[21px] w-[21px] items-center justify-center rounded-[3px] border border-white";

export default function App() {
  return (
    <div className="flex h-screen flex-col overflow-hidden bg-[#0a43dc] px-[3px] pb-1 font-['Roboto','Noto_Sans_CJK_JP',sans-serif] text-[11px] leading-[14px] text-[#d6d6d6] [font-feature-settings:'palt']">
      <Gradients />
      <header className="-mx-[3px] flex h-[30px] shrink-0 items-center gap-[2px] bg-linear-to-b from-[#3c95ff] via-[#0453e0] via-15% to-[#0668fc] pl-[5px] pr-[6px] pt-[2px]">
        <Logo />
        <h1 className="ml-[2px] mr-auto font-['DejaVu_Sans',sans-serif] text-xs font-bold text-white [text-shadow:1px_1px_#0a2a80]">modo</h1>
        <button aria-label="最小化" className={clsx(caption, "bg-linear-to-br from-[#6b9bf5] to-[#1c4fd6]")}>
          <svg width="13" height="13"><path d="M1 9h7v3H1z" fill="#fff" /></svg>
        </button>
        <button aria-label="最大化" className={clsx(caption, "bg-linear-to-br from-[#6b9bf5] to-[#1c4fd6]")}>
          <svg width="13" height="13"><path d="M1 1h11v11H1zM2 4v7h9V4z" fill="#fff" fillRule="evenodd" /></svg>
        </button>
        <button aria-label="閉じる" className={clsx(caption, "bg-linear-to-br from-[#ee8a6b] to-[#cf3a15]")}>
          <svg width="13" height="13"><path d="M2 2l9 9M11 2l-9 9" stroke="#fff" strokeWidth="2" /></svg>
        </button>
      </header>

      <nav className="flex h-5 shrink-0 items-center gap-[13px] border-b border-[#fbfaf5] bg-[#ece9d8] pl-[7px] text-black">
        {menus.map((menu) => (
          <button key={menu} className="whitespace-nowrap">{menu}</button>
        ))}
      </nav>

      <main className="flex min-h-0 flex-1 bg-[#484848]">
        <ToolColumn />
        <ModelColumn />
        <SceneColumn />
      </main>
    </div>
  );
}
